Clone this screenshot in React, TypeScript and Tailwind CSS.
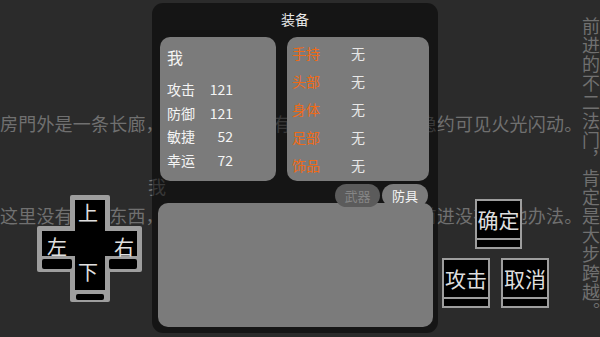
import React from "react";

function GameBtn({ label, className }: { label: string; className: string }) {
  return (
    <div className={`absolute flex flex-col border-2 border-[#9e9e9e] bg-black ${className}`}>
      <div className="flex flex-1 items-center justify-center text-[21px] leading-none text-[#dedede]">{label}</div>
      <div className="h-[2px] bg-[#9e9e9e]" />
      <div className="h-[7px] bg-black" />
    </div>
  );
}

function DPad() {
  return (
    <svg className="absolute left-[30px] top-[190px]" width="120" height="115" viewBox="0 0 120 115">
      <rect x="40" y="5" width="40" height="107" rx="2" fill="#9e9e9e" />
      <rect x="7" y="36" width="105" height="46" rx="2" fill="#9e9e9e" />
      <rect x="45" y="10" width="30" height="90" fill="#000" />
      <rect x="12" y="41" width="95" height="25" fill="#000" />
      <rect x="12" y="69" width="30" height="10" rx="2" fill="#000" />
      <rect x="79" y="69" width="28" height="10" rx="2" fill="#000" />
      <rect x="46" y="104" width="28" height="6" rx="2" fill="#000" />
      <g fill="#e0e0e0" fontSize="20" textAnchor="middle" dominantBaseline="central" fontFamily="'Noto Sans CJK SC', sans-serif">
        <text x="58" y="22">上</text>
        <text x="27" y="56">左</text>
        <text x="94" y="56">右</text>
        <text x="58" y="81">下</text>
      </g>
    </svg>
  );
}

export default function App() {
  const stats = [
    ["攻击", "121"],
    ["防御", "121"],
    ["敏捷", "52"],
    ["幸运", "72"],
  ];
  const slots = ["手持", "头部", "身体", "足部", "饰品"];
  return (
    <div className="relative h-[337px] w-[600px] overflow-hidden bg-[#2b2b2b] font-['Noto_Sans_CJK_SC',sans-serif]">
      {/* background story text */}
      <div className="whitespace-nowrap pt-[113px] text-[18px] leading-[20px] tracking-[0.2px] text-[#707070]">
        <div>房門外是一条长廊，长廊尽头似乎有一扇门，门缝中隐约可见火光闪动。</div>
        <div className="mt-[43px] pl-[148px]">我</div>
        <div className="mt-[9px]">这里没有什么东西，如果你想走出这里，除了一路向前进没有其他办法。</div>
      </div>
      <div className="absolute left-[582px] top-[17px] text-[18px] leading-[18px] tracking-[1px] text-[#707070] [writing-mode:vertical-rl]">
        前进的不二法门，肯定是大步跨越。
      </div>

      <DPad />
      <GameBtn label="确定" className="left-[475px] top-[199px] h-[50px] w-[47px]" />
      <GameBtn label="攻击" className="left-[442px] top-[258px] h-[50px] w-[48px]" />
      <GameBtn label="取消" className="left-[501px] top-[258px] h-[50px] w-[48px]" />

      {/* equipment dialog */}
      <div className="absolute left-[152px] top-[3px] flex h-[330px] w-[286px] flex-col rounded-[11px] bg-black/50">
        <div className="flex h-[30px] items-center justify-center pt-[2px] text-[14px] text-[#e6e6e6]">装备</div>
        <div className="mt-[4px] flex h-[144px] gap-[11px] pl-[8px]">
          <div className="w-[116px] rounded-[10px] bg-[#7b7b7b] pl-[7px] pt-[10px] text-[#f4f4f4]">
            <div className="text-[16px] leading-[20px]">我</div>
            <div className="mt-[11px] flex w-[66px] flex-col">
              {stats.map(([k, v]) => (
                <div key={k} className="flex h-[23.5px] items-center justify-between text-[14px]">
                  <span>{k}</span>
                  <span>{v}</span>
                </div>
              ))}
            </div>
          </div>
          <div className="w-[142px] rounded-[10px] bg-[#7b7b7b] pl-[5px] pt-[2px]">
            {slots.map((s) => (
              <div key={s} className="flex h-[28px] items-center text-[14px]">
                <span className="w-[59px] text-[#ef6a17]">{s}</span>
                <span className="text-[#e8e8e8]">无</span>
              </div>
            ))}
          </div>
        </div>
        <div className="relative z-10 mt-[3px] flex justify-end gap-[2px] pr-[10px]">
          <div className="flex h-[23px] w-[45px] items-center justify-center rounded-full bg-[#5b5b5b] text-[13px] text-[#858585]">武器</div>
          <div className="flex h-[23px] w-[46px] items-center justify-center rounded-full bg-[#7b7b7b] text-[13px] text-[#f4f4f4]">防具</div>
        </div>
        <div className="-mt-[4px] ml-[6px] h-[124px] w-[275px] rounded-[10px] bg-[#7b7b7b]" />
      </div>
    </div>
  );
}
